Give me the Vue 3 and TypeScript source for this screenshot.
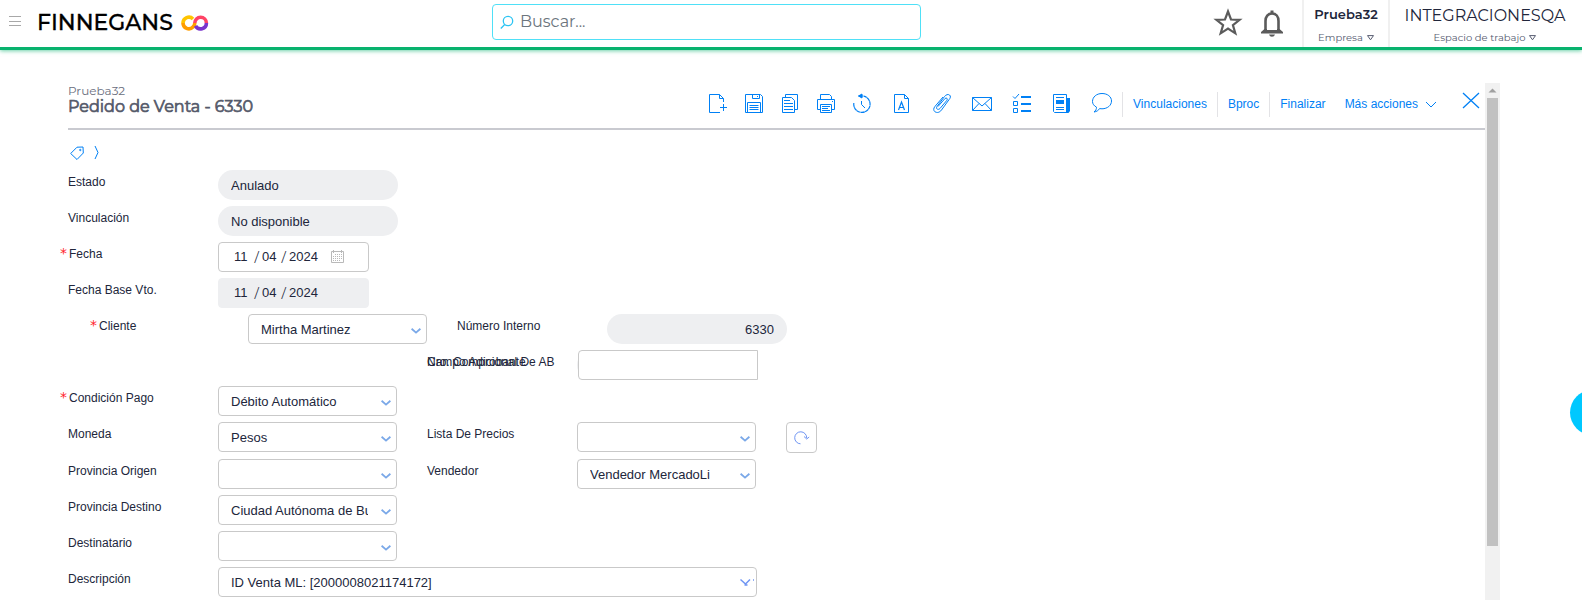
<script setup lang="ts">
import { reactive, ref } from 'vue'

interface Field {
  id: string
  label: string
  kind: 'pill' | 'date' | 'select' | 'overlap'
  value: string
  required?: boolean
  disabled?: boolean
  alignEnd?: boolean
}

interface Row {
  id: string
  indent?: boolean
  offset?: boolean
  refresh?: boolean
  fields: Field[]
}

const search = ref('')
const description = ref('ID Venta ML: [2000008021174172]')
const extra = ref('')

const rows = reactive<Row[]>([
  { id: 'r1', fields: [{ id: 'estado', label: 'Estado', kind: 'pill', value: 'Anulado' }] },
  { id: 'r2', fields: [{ id: 'vinculacion', label: 'Vinculación', kind: 'pill', value: 'No disponible' }] },
  { id: 'r3', fields: [{ id: 'fecha', label: 'Fecha', kind: 'date', value: '11/04/2024', required: true }] },
  { id: 'r4', fields: [{ id: 'fecha-base', label: 'Fecha Base Vto.', kind: 'date', value: '11/04/2024', disabled: true }] },
  {
    id: 'r5',
    indent: true,
    fields: [
      { id: 'cliente', label: 'Cliente', kind: 'select', value: 'Mirtha Martinez', required: true },
      { id: 'numero', label: 'Número Interno', kind: 'pill', value: '6330', alignEnd: true },
    ],
  },
  { id: 'r6', offset: true, fields: [{ id: 'campo', label: 'Campo Adicional De AB', kind: 'overlap', value: '' }] },
  { id: 'r7', fields: [{ id: 'condicion', label: 'Condición Pago', kind: 'select', value: 'Débito Automático', required: true }] },
  {
    id: 'r8',
    refresh: true,
    fields: [
      { id: 'moneda', label: 'Moneda', kind: 'select', value: 'Pesos' },
      { id: 'lista', label: 'Lista De Precios', kind: 'select', value: '' },
    ],
  },
  {
    id: 'r9',
    fields: [
      { id: 'origen', label: 'Provincia Origen', kind: 'select', value: '' },
      { id: 'vendedor', label: 'Vendedor', kind: 'select', value: 'Vendedor MercadoLi' },
    ],
  },
  { id: 'r10', fields: [{ id: 'destino', label: 'Provincia Destino', kind: 'select', value: 'Ciudad Autónoma de Buenos Aires' }] },
  { id: 'r11', fields: [{ id: 'destinatario', label: 'Destinatario', kind: 'select', value: '' }] },
])

const part = (value: string, index: number): string => value.split('/')[index]
</script>

<template>
  <div class="page">
    <header class="topbar">
      <div class="brand">
        <button class="plain" type="button" aria-label="Menú">
          <svg width="12" height="12" viewBox="0 0 12 12"><path d="M0 .5h12M0 5.500h12M0 9.500h12" stroke="#a8a8a8" /></svg>
        </button>
        <a class="logo" href="#">
          <span>FINNEGANS</span>
          <svg width="27" height="16" viewBox="0 0 27 16" fill="none" stroke-width="3.600">
            <path d="M2 8a5.800 5.800 0 0 1 10-4" stroke="#ffc400" />
            <path d="M2 8a5.800 5.800 0 0 0 10 4Q13.800 10.500 13.800 8" stroke="#ff9d00" />
            <path d="M13.800 8a5.800 5.800 0 0 1 11.600 0" stroke="#ff4365" />
            <path d="M14.500 10.800a5.800 5.800 0 0 0 10.900-2.800" stroke="#7a35cc" />
          </svg>
        </a>
      </div>
      <div class="search">
        <svg width="14" height="14" viewBox="0 0 14 14" fill="none" stroke="#2bc4f3" stroke-width="1.300"><circle cx="8" cy="6" r="4.700" /><path d="M4.700 9.500 .8 13.500" /></svg>
        <input v-model="search" type="text" placeholder="Buscar..." aria-label="Buscar" />
      </div>
      <div class="account">
        <button class="plain star" type="button" aria-label="Favoritos">
          <svg width="28" height="28" viewBox="0 0 28 28" fill="none" stroke="#5b5b5b" stroke-width="2.200"><path d="M14 1.500 17 9.500 25.600 9.800 18.900 15.100 21.300 23.300 14 18.600 6.700 23.300 9.100 15.100 2.400 9.800 11 9.500Z" /></svg>
        </button>
        <button class="plain bell" type="button" aria-label="Notificaciones">
          <svg width="22" height="28" viewBox="0 0 22 28"><path d="M4.500 20.500V11c0-4.600 2.500-7.500 6.500-7.500s6.500 2.900 6.500 7.500v9.500" fill="none" stroke="#5b5b5b" stroke-width="2.600" /><path d="M9.500.500h3v3h-3zM0 22l3.500-3h15l3.500 3v1.500H0ZM8 24.500h6q-.6 2.200-3 2.200t-3-2.200Z" fill="#5b5b5b" /><path d="M6 17.500h10v2.500H6z" fill="#fff" /></svg>
        </button>
        <button class="scope company" type="button">
          <strong>Prueba32</strong>
          <span>Empresa <svg width="7" height="6" viewBox="0 0 7 6"><path d="M.5.600h6L3.500 4.800Z" fill="none" stroke="#555b70" /></svg></span>
        </button>
        <button class="scope workspace" type="button">
          <strong>INTEGRACIONESQA</strong>
          <span>Espacio de trabajo <svg width="7" height="6" viewBox="0 0 7 6"><path d="M.5.600h6L3.500 4.800Z" fill="none" stroke="#555b70" /></svg></span>
        </button>
      </div>
    </header>

    <main class="panel">
      <section class="content">
        <div class="titlebar">
          <div class="title">
            <p>Prueba32</p>
            <h1>Pedido de Venta - 6330</h1>
          </div>
          <div class="tools">
            <button class="tool" type="button" aria-label="Nuevo">
              <svg viewBox="0 0 22 22"><path d="M11 19.500H.5v-18h10l4 4V9M10.500 1.500v4h4M14.500 11v7M11 14.500h7" /></svg>
            </button>
            <button class="tool" type="button" aria-label="Guardar">
              <svg viewBox="0 0 22 22"><path d="M.5 1.500h15l2 2v16H.5ZM7.500 1.500v4h7v-4M2.500 19.500v-10h13v10M4.500 12.500h9M4.500 14.500h9M4.500 16.500h9M12.500 3v1" /></svg>
            </button>
            <button class="tool" type="button" aria-label="Copiar">
              <svg viewBox="0 0 22 22"><path d="M4.500 4V1.500h12v15H14M1.500 4.500h9l3 3v12h-12ZM3 7.500h6M3 10.500h9M3 13.500h9M3 16.500h9" /></svg>
            </button>
            <button class="tool" type="button" aria-label="Imprimir">
              <svg viewBox="0 0 22 22"><path d="M3.500 6.500v-5h9l2 2v3M3.500 16.500h-3v-10h17v10h-3M3.500 11.500h11v8h-11ZM5 13.500h8M5 15.500h6M5 17.500h8M15 8.500h1" /></svg>
            </button>
            <button class="tool" type="button" aria-label="Historial">
              <svg viewBox="0 0 22 22"><path d="M.8 10a8.200 8.200 0 1 0 10-6.800" stroke-width="1.200" stroke-dasharray="4 .3" /><path d="M10.500 3H5.500M9 1v4L5.500 3Z" fill="currentColor" /><path d="M8.500 8v3.500l3.500 3.500" /></svg>
            </button>
            <button class="tool wide" type="button" aria-label="Texto">
              <svg viewBox="0 0 22 22"><path d="M3.500 1.500h10l4 4v14h-14ZM13.500 1.500v4h4" /><path d="M7.500 17l3-8 3 8M8.500 14.500h4" stroke-width="1.200" /></svg>
            </button>
            <button class="tool wide" type="button" aria-label="Adjuntar">
              <svg viewBox="0 0 22 22"><path d="M7 13.500 14 5.500c1.500-1.300 3 .3 2 1.700L9 15.500c-2 2-4.500.3-3-2L13.500 3.500c1.600-1.800 3.500-2.600 5-1.500s1 3-.5 4.700L10.500 17c-2 2.700-4.500 3-6.500 1.800-1.600-1.300-1.800-3.300 0-5.400l8-9.400" /></svg>
            </button>
            <button class="tool wide" type="button" aria-label="Correo">
              <svg viewBox="0 0 22 22"><path d="M1.500 4.500h19v13h-19ZM1.500 4.500 11 13l9.500-8.500M1.500 17.500 8 10.500M20.500 17.500 14 10.500" /></svg>
            </button>
            <button class="tool wide" type="button" aria-label="Tareas">
              <svg viewBox="0 0 22 22"><path d="M2.500 8.500h4v4h-4ZM2.500 15.500h4v4h-4ZM2 3.500l2 2L8 1" /><path d="M10 4h10M10 11h10M10 18h10" stroke-width="2" /></svg>
            </button>
            <button class="tool wide" type="button" aria-label="Novedades">
              <svg viewBox="0 0 22 22"><path d="M2.500 1.500h13v18h-12l-1-1ZM5 4.500h8M5 14.500h8M5 16.500h8" /><path d="M5 7h8v4H5zM16 5h3v13l-1.500 2H15z" fill="currentColor" stroke="none" /></svg>
            </button>
            <button class="tool wide" type="button" aria-label="Comentarios">
              <svg viewBox="0 0 22 22"><path d="M5.500 14.200C3 12.800 1.500 11 1.500 8.500c0-4.500 4-8 9.500-8s9.500 3.200 9.500 7.500-4 7.800-9.500 7.800l-2.500-.2c-1 1.900-3 3-5.500 3.400 1.700-1.300 2.600-3 2.500-4.800Z" /></svg>
            </button>
            <nav class="actions" aria-label="Acciones">
              <button type="button">Vinculaciones</button>
              <button type="button">Bproc</button>
              <button type="button">Finalizar</button>
              <button class="more" type="button">Más acciones <svg width="12" height="8" viewBox="0 0 12 8"><path d="M1 2l5 5 5-5" /></svg></button>
            </nav>
            <button class="close" type="button" aria-label="Cerrar"><svg width="16" height="16" viewBox="0 0 16 16"><path d="M0 0 16 15M16 0 0 15" /></svg></button>
          </div>
        </div>

        <form class="form" @submit.prevent>
          <div class="tags">
            <button class="plain" type="button" aria-label="Etiquetas"><svg width="14" height="14" viewBox="0 0 14 14"><path d="M.7 7.500 7 1.200l6-.2.300 6L7 13.500Z" /><circle cx="10.300" cy="4" r=".7" /></svg></button>
            <button class="plain" type="button" aria-label="Expandir"><svg width="6" height="14" viewBox="0 0 6 14"><path d="M1 0l3 6.500L1 13" /></svg></button>
          </div>

          <div v-for="row in rows" :key="row.id" class="row" :class="{ indent: row.indent, offset: row.offset }">
            <div v-for="field in row.fields" :key="field.id" class="field">
              <div class="labels" :class="{ required: field.required }">
                <i v-if="field.required">*</i>
                <label v-if="field.kind === 'overlap'" for="comprobante">Nro. Comprobante</label>
                <label :for="field.id">{{ field.label }}</label>
              </div>

              <input v-if="field.kind === 'pill'" :id="field.id" class="pill" :class="{ end: field.alignEnd }" type="text" readonly :value="field.value" />

              <div v-else-if="field.kind === 'date'" class="date" :class="{ disabled: field.disabled }">
                <input :id="field.id" class="day" type="text" :value="part(field.value, 0)" :readonly="field.disabled" />
                <span>/</span>
                <input class="month" type="text" aria-label="Mes" :value="part(field.value, 1)" :readonly="field.disabled" />
                <span>/</span>
                <input class="year" type="text" aria-label="Año" :value="part(field.value, 2)" :readonly="field.disabled" />
                <button v-if="!field.disabled" class="plain" type="button" aria-label="Calendario">
                  <svg width="13" height="13" viewBox="0 0 13 13" fill="none" stroke="#b9b9b9"><path d="M.5 1.500h12v11H.5ZM2.500 0v3M10.500 0v3" /><path d="M4 4.500h7M2 6.500h9M2 8.500h9M2 10.500h7" stroke-dasharray="1 1" /></svg>
                </button>
              </div>

              <div v-else-if="field.kind === 'select'" class="select">
                <select :id="field.id" :value="field.value"><option :value="field.value">{{ field.value }}</option></select>
                <svg width="10" height="6" viewBox="0 0 10 6"><path d="M.6.800 5 4.600 9.400.800" /></svg>
              </div>

              <div v-else class="stack">
                <input id="comprobante" class="pill" type="text" readonly value="" />
                <input :id="field.id" v-model="extra" class="text" type="text" />
              </div>
            </div>
            <button v-if="row.refresh" class="refresh" type="button" aria-label="Actualizar">
              <svg width="16" height="14" viewBox="0 0 16 14"><path d="M6.500 12.800A6 6 0 1 1 12.700 7M10 5.500l2.700 2.500L15.200 6" /></svg>
            </button>
          </div>

          <div class="row">
            <div class="field">
              <div class="labels"><label for="descripcion">Descripción</label></div>
              <div class="description">
                <input id="descripcion" v-model="description" class="text" type="text" />
                <svg width="14" height="8" viewBox="0 0 14 8"><path d="M.5 1.500l5 4.500L10 1.500M4.500 7h3M13 2h1" /></svg>
              </div>
            </div>
          </div>
        </form>
      </section>
      <div class="scrollbar" aria-hidden="true">
        <svg width="15" height="15" viewBox="0 0 15 15"><path d="M3.500 9.500 7.500 5.500l4 4Z" fill="#a0a0a0" /></svg>
        <div class="thumb"></div>
      </div>
    </main>
    <button class="chat" type="button" aria-label="Chat"></button>
  </div>
</template>

<style>
body {
  margin: 0;
  background: #fff;
}
</style>

<style scoped>
* {
  box-sizing: border-box;
}

.page {
  position: relative;
  display: flex;
  flex-direction: column;
  height: 100vh;
  overflow: hidden;
  color: #21263b;
  font-family: "Liberation Sans", Arial, sans-serif;
  font-size: 12px;
}

button,
input,
select {
  margin: 0;
  font-family: inherit;
  color: inherit;
  outline: none;
}

button {
  border: 0;
  background: none;
  padding: 0;
  cursor: pointer;
}

svg {
  display: block;
  flex: none;
  overflow: visible;
}

.plain {
  display: flex;
  align-items: center;
}

.topbar {
  display: flex;
  flex: none;
  height: 50px;
  border-bottom: 3px solid #08b26e;
  box-shadow: 0 1px 4px #08b26e99;
  font-family: Montserrat, Inter, sans-serif;
}

.brand {
  display: flex;
  align-items: center;
  gap: 16px;
  width: 492px;
  padding: 0 0 4px 9px;
}

.logo {
  display: flex;
  align-items: center;
  gap: 8px;
  padding-top: 2px;
  color: #000;
  text-decoration: none;
  font-size: 22px;
  font-weight: 500;
  line-height: 24px;
  -webkit-text-stroke: 0.3px #000;
}

.search {
  display: flex;
  align-items: center;
  gap: 6px;
  flex: 0 1 429px;
  height: 36px;
  margin-top: 4px;
  padding: 0 7px;
  border: 1px solid #4fe0f7;
  border-radius: 4px;
}

.search input {
  flex: 1;
  min-width: 0;
  padding: 0 0 2px;
  border: 0;
  background: none;
  font-size: 16px;
  font-weight: 400;
}

.search input::placeholder {
  color: #6c757d;
}

.account {
  display: flex;
  margin-left: auto;
}

.star {
  margin-right: 19px;
}

.bell {
  margin-right: 19px;
}

.scope {
  display: flex;
  flex-direction: column;
  align-items: center;
  border-left: 2px solid #f0f0f0;
}

.company {
  width: 86px;
}

.workspace {
  width: 194px;
  padding-right: 2px;
}

.scope strong {
  height: 32px;
  font-size: 13px;
  font-weight: 600;
  line-height: 29px;
}

.workspace strong {
  font-size: 16px;
  font-weight: 400;
  line-height: 31px;
}

.scope span {
  display: flex;
  align-items: center;
  gap: 4px;
  color: #555b70;
  font-size: 10px;
  line-height: 12px;
}

.panel {
  display: flex;
  flex: 1;
  min-height: 0;
  margin: 33px 82px 0 68px;
}

.content {
  flex: 1;
  min-width: 0;
}

.titlebar {
  display: flex;
  justify-content: space-between;
  height: 47px;
  border-bottom: 2px solid #c9cad0;
}

.title {
  font-family: Montserrat, Inter, sans-serif;
  color: #555a6a;
}

.title p {
  margin: 0;
  font-size: 12px;
  font-weight: 400;
  line-height: 16px;
  color: #6a6e7d;
}

.title h1 {
  margin: 0;
  font-size: 16px;
  font-weight: 400;
  line-height: 15px;
  -webkit-text-stroke: 0.7px #555a6a;
}

.tools {
  display: flex;
  align-items: center;
  height: 42px;
  color: #0080f5;
}

.tool {
  display: flex;
  justify-content: center;
  width: 36px;
}

.tool.wide {
  width: 40px;
}

.tools svg,
.tags svg {
  fill: none;
  stroke: currentColor;
}

.tool svg {
  width: 22px;
  height: 22px;
}

.actions {
  display: flex;
}

.actions button {
  height: 25px;
  padding: 0 10px;
  border-left: 1px solid #e3e3e6;
  font-size: 12px;
  line-height: 24px;
}

.actions .more {
  display: flex;
  align-items: center;
  gap: 7px;
  padding-left: 8px;
  border-left-color: transparent;
}

.close {
  margin: 0 6px 6px 16px;
}

.close svg {
  stroke-width: 1.3;
}

.form {
  display: flex;
  flex-direction: column;
  gap: 6px;
  padding-top: 16px;
}

.tags {
  display: flex;
  gap: 10px;
  height: 18px;
  padding-left: 2px;
  color: #0080f5;
  align-items: flex-start;
}

.row {
  display: flex;
}

.row.indent {
  padding-left: 30px;
}

.row.offset {
  padding-left: 359px;
}

.field {
  display: flex;
  min-width: 359px;
  height: 30px;
}

.labels {
  display: grid;
  flex: none;
  width: 150px;
  height: 24px;
  align-items: center;
  white-space: nowrap;
}

.labels label {
  grid-area: 1 / 1;
}

.labels.required {
  display: flex;
  width: 158px;
  margin-left: -8px;
}

.labels i {
  width: 9px;
  padding-bottom: 2px;
  color: #ff1f2e;
  font: 14px/14px "DejaVu Sans", sans-serif;
}

.pill {
  width: 180px;
  height: 30px;
  padding: 0 13px;
  border: 0;
  border-radius: 15px;
  background: #eeeff1;
  font-size: 13px;
}

.pill.end {
  text-align: right;
}

.date {
  display: flex;
  align-items: center;
  width: 151px;
  height: 30px;
  padding-left: 15px;
  border: 1px solid #c9c9c9;
  border-radius: 4px;
  font-size: 13px;
}

.date.disabled {
  border-color: #eeeff1;
  background: #eeeff1;
}

.date input {
  padding: 0 0 2px;
  border: 0;
  background: none;
  font-size: 13px;
}

.date .day {
  width: 20px;
}

.date .month {
  width: 19px;
}

.date .year {
  width: 42px;
}

.date span {
  width: 8px;
  font-family: "Open Sans", sans-serif;
  font-size: 16px;
  font-weight: 300;
  line-height: 20px;
}

.date .plain {
  padding-bottom: 1px;
}

.select {
  display: grid;
  align-items: center;
  width: 179px;
  height: 30px;
}

.select select {
  grid-area: 1 / 1;
  width: 100%;
  height: 30px;
  padding: 0 28px 0 12px;
  border: 1px solid #c9c9c9;
  border-radius: 4px;
  background: #fff;
  appearance: none;
  font-size: 13px;
}

.select svg {
  grid-area: 1 / 1;
  justify-self: end;
  margin: 4px 6px 0 0;
  fill: none;
  stroke: #7aa8e8;
  stroke-width: 1.8;
  pointer-events: none;
}

.stack {
  display: grid;
}

.stack .pill {
  grid-area: 1 / 1;
}

.text {
  height: 30px;
  padding: 0 12px;
  border: 1px solid #c9c9c9;
  border-radius: 4px;
  background: #fff;
  font-size: 13px;
}

.stack .text {
  grid-area: 1 / 1;
  width: 180px;
  margin-left: 1px;
  border-radius: 4px 0 0 4px;
}

.refresh {
  display: grid;
  place-items: center;
  width: 31px;
  height: 31px;
  border: 1px solid #c9c9c9;
  border-radius: 4px;
}

.refresh svg,
.description svg {
  fill: none;
  stroke: #6f95f3;
}

.description {
  display: grid;
  align-items: center;
  width: 539px;
}

.description .text {
  grid-area: 1 / 1;
  width: 100%;
}

.description svg {
  grid-area: 1 / 1;
  justify-self: end;
  margin-right: 3px;
  stroke-width: 1.5;
}

.scrollbar {
  display: flex;
  flex-direction: column;
  width: 15px;
  padding: 0 0 54px;
  background: #f1f1f1;
}

.thumb {
  flex: 1;
  margin: 0 2px;
  background: #c1c1c1;
}

.chat {
  position: absolute;
  top: 390px;
  right: -33px;
  width: 45px;
  height: 45px;
  border-radius: 50%;
  background: #00c8ff;
}
</style>
